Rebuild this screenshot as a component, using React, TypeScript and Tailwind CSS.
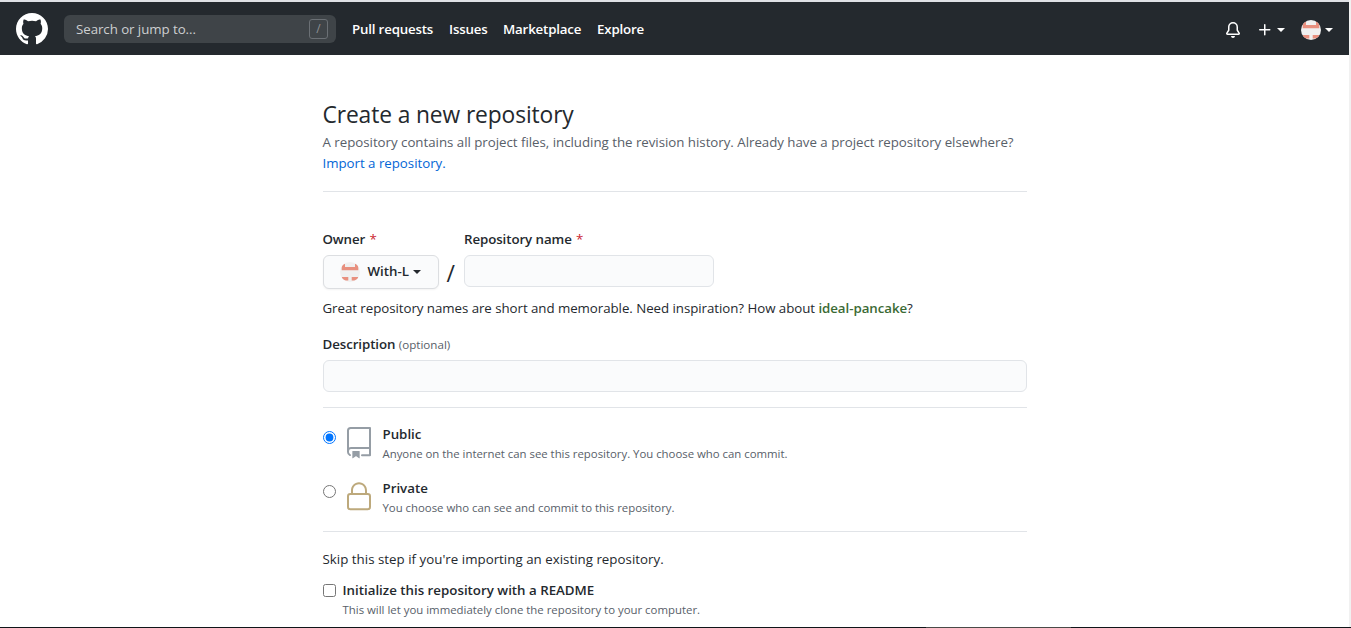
import React from "react";
import clsx from "clsx";

const MARK_PATH = "M8 0C3.58 0 0 3.58 0 8c0 3.54 2.29 6.53 5.47 7.59.4.07.55-.17.55-.38 0-.19-.01-.82-.01-1.49-2.01.37-2.53-.49-2.69-.94-.09-.23-.48-.94-.82-1.13-.28-.15-.68-.52-.01-.53.63-.01 1.08.58 1.23.82.72 1.21 1.87.87 2.33.66.07-.52.28-.87.51-1.07-1.78-.2-3.64-.89-3.64-3.95 0-.87.31-1.59.82-2.15-.08-.2-.36-1.02.08-2.12 0 0 .67-.21 2.2.82.64-.18 1.32-.27 2-.27.68 0 1.36.09 2 .27 1.53-1.04 2.2-.82 2.2-.82.44 1.1.16 1.92.08 2.12.51.56.82 1.27.82 2.15 0 3.07-1.87 3.75-3.65 3.95.29.25.54.73.54 1.48 0 1.07-.01 1.93-.01 2.2 0 .21.15.46.55.38A8.013 8.013 0 0016 8c0-4.42-3.58-8-8-8z"
const BELL_PATH = "M8 16a2 2 0 001.985-1.75c.017-.137-.097-.25-.235-.25h-3.5c-.138 0-.252.113-.235.25A2 2 0 008 16zM3 5a5 5 0 0110 0v2.947c0 .05.015.098.042.139l1.703 2.555A1.518 1.518 0 0113.482 13H2.518a1.518 1.518 0 01-1.263-2.36l1.703-2.554A.25.25 0 003 7.947V5zm5-3.5A3.5 3.5 0 004.5 5v2.947c0 .346-.102.683-.294.97l-1.703 2.556a.018.018 0 00-.003.01l.001.006c0 .002.002.004.004.006a.017.017 0 00.006.004l.007.001h10.964l.007-.001a.016.016 0 00.006-.004.016.016 0 00.004-.006l.001-.007a.017.017 0 00-.003-.01l-1.703-2.554a1.75 1.75 0 01-.294-.97V5A3.5 3.5 0 008 1.5z"
const PLUS_PATH = "M7.75 2a.75.75 0 01.75.75V7h4.25a.75.75 0 110 1.5H8.5v4.25a.75.75 0 11-1.5 0V8.5H2.75a.75.75 0 010-1.5H7V2.75A.75.75 0 017.75 2z"
const REPO_PATH = "M3 2.75A2.75 2.75 0 015.75 0h14.5a.75.75 0 01.75.75v20.5a.75.75 0 01-.75.75h-6a.75.75 0 010-1.5h5.25v-4H6A1.5 1.5 0 004.5 18v.75c0 .716.43 1.334 1.05 1.605a.75.75 0 01-.6 1.374A3.25 3.25 0 013 18.75v-16zM19.5 1.5H5.75c-.69 0-1.25.56-1.25 1.25v12.651A2.989 2.989 0 016 15h13.5V1.5zM7 18.25a.25.25 0 01.25-.25h5a.25.25 0 01.25.25v5.01a.25.25 0 01-.397.201l-2.206-1.604a.25.25 0 00-.294 0L7.397 23.46a.25.25 0 01-.397-.2v-5.01z"
const LOCK_PATH = "M6 9V7.25C6 3.845 8.503 1 12 1s6 2.845 6 6.25V9h.5a2.5 2.5 0 012.5 2.5v8a2.5 2.5 0 01-2.5 2.5h-13A2.5 2.5 0 013 19.5v-8A2.5 2.5 0 015.5 9H6zm1.5-1.75C7.5 4.58 9.422 2.5 12 2.5c2.578 0 4.5 2.08 4.5 4.75V9h-9V7.25zm-3 4.25a1 1 0 011-1h13a1 1 0 011 1v8a1 1 0 01-1 1h-13a1 1 0 01-1-1v-8z"

function Icon({path, box = 16, className}: { path: string; box?: number; className?: string }) {
    return (
        <svg viewBox={`0 0 ${box} ${box}`} fill="currentColor" fillRule="evenodd"
             className={clsx("shrink-0", className)}>
            <path d={path}/>
        </svg>
    )
}

function Caret({className}: { className?: string }) {
    return <span className={clsx("h-0 w-0 border-x-4 border-t-4 border-x-transparent", className)}/>
}

function Avatar({className}: { className?: string }) {
    return (
        <svg viewBox="0 0 20 20" className={clsx("size-5 shrink-0 rounded-full", className)}>
            <rect width="20" height="20" fill="#f0f0f0"/>
            <path fill="#e8907f" d="M1.7 1.7H5V5h10V1.7h3.3v6.6H1.7zM1.7 15h6.6v3.6H1.7zM11.7 15h6.6v3.6h-6.6z"/>
        </svg>
    )
}

function Required() {
    return <span className="ml-px font-normal text-[#cb2431]">*</span>
}

function Header() {
    const links = [
        {label: "Pull requests", className: "w-[97px]"},
        {label: "Issues", className: "w-[54px]"},
        {label: "Marketplace", className: "w-[94px]"},
        {label: "Explore", className: ""},
    ]

    return (
        <header className="flex h-[55px] items-center border-t-2 border-[#dfe1e5] bg-[#24292e] pt-px pr-4 pl-4 text-white">
            <Icon path={MARK_PATH} className="size-8"/>
            <div className="ml-4 flex h-7 w-[272px] items-center justify-between rounded-md bg-[#3f4448] pr-2 pl-3">
                <span className="pt-px text-[13.3px] tracking-[-0.06px] text-[#cdcfd1]">Search or jump to...</span>
                <span className="flex h-5 w-[19px] items-center justify-center rounded-[3px] border border-[#6b7075] text-[12px] text-[#8d9195]">/</span>
            </div>
            <nav className="ml-4 flex pt-0.5 text-[13.3px] font-semibold tracking-[-0.18px] whitespace-nowrap">
                {links.map(link => (
                    <a key={link.label} href="#" className={link.className}>{link.label}</a>
                ))}
            </nav>
            <div className="ml-auto flex items-center pt-0.5">
                <Icon path={BELL_PATH} className="size-4"/>
                <Icon path={PLUS_PATH} className="ml-4 size-4"/>
                <Caret className="ml-1"/>
                <Avatar className="ml-4"/>
                <Caret className="ml-1"/>
            </div>
        </header>
    )
}

function VisibilityOption({title, note, icon, iconClass, checked}: {
    title: string
    note: string
    icon: string
    iconClass: string
    checked?: boolean
}) {
    return (
        <label className="flex h-[54px] items-start">
            <input type="radio" name="visibility" defaultChecked={checked} className="mt-1 size-[13px]"/>
            <Icon path={icon} box={24} className={clsx("ml-[7px] size-8", iconClass)}/>
            <span className="ml-2 flex flex-col">
                <span className="text-[13.3px] leading-[15px] font-semibold">{title}</span>
                <span className="mt-[3px] text-[11.4px] leading-[18px] tracking-[-0.015px] text-[#586069]">{note}</span>
            </span>
        </label>
    )
}

export default function App() {
    return (
        <div className="flex h-[628px] flex-col overflow-hidden bg-white font-['Open_Sans','Noto_Sans',sans-serif] text-[#24292e]">
            <div className="flex min-h-0 flex-1">
                <div className="w-[1349px]">
                    <Header/>
                    <main className="mx-auto w-[704px] pt-[42px] text-[13.3px] leading-[21px]">
                        <h1 className="text-[22.8px] leading-[35px] tracking-[-0.12px]">Create a new repository</h1>
                        <p className="tracking-[-0.025px] text-[#586069]">
                            <span className="block whitespace-nowrap">A repository contains all project files, including the revision history. Already have a project repository elsewhere?</span>
                            <a href="#" className="text-[#0366d6]">Import a repository.</a>
                        </p>
                        <hr className="mt-[17px] border-[#e1e4e8]"/>

                        <div className="mt-[37px] flex">
                            <div className="w-[141.5px]">
                                <div className="font-semibold tracking-[-0.1px]">Owner <Required/></div>
                                <div className="mt-[5px] flex">
                                    <button className="flex h-[34px] w-[116px] items-center rounded-md border border-[#dcdee1] bg-[#fafbfc] pl-4 font-semibold shadow-xs">
                                        <Avatar/>
                                        <span className="ml-2 pb-0.5">With-L</span>
                                        <Caret className="ml-1"/>
                                    </button>
                                    <span className="ml-2 text-[23px] leading-9">/</span>
                                </div>
                            </div>
                            <div>
                                <div className="font-semibold tracking-[-0.08px]">Repository name <Required/></div>
                                <input className="mt-[5px] block h-8 w-[250px] rounded-md border border-[#e1e4e8] bg-[#fafbfc]"/>
                            </div>
                        </div>
                        <p className="mt-[7px] tracking-[-0.05px] whitespace-nowrap">
                            <span>Great repository names are short and memorable. Need inspiration? How about </span>
                            <strong className="font-semibold text-[#3b6a34]">ideal-pancake</strong>?
                        </p>

                        <div className="mt-[15px]">
                            <span className="font-semibold tracking-[-0.08px]">Description</span>{" "}
                            <span className="text-[11.6px] text-[#586069]">(optional)</span>
                        </div>
                        <input className="mt-[5px] block h-8 w-full rounded-md border border-[#e1e4e8] bg-[#fafbfc]"/>
                        <hr className="mt-[15px] mb-[19px] border-[#e1e4e8]"/>

                        <VisibilityOption
                            title="Public"
                            note="Anyone on the internet can see this repository. You choose who can commit."
                            icon={REPO_PATH}
                            iconClass="text-[#959da5]"
                            checked
                        />
                        <VisibilityOption
                            title="Private"
                            note="You choose who can see and commit to this repository."
                            icon={LOCK_PATH}
                            iconClass="text-[#bda97c]"
                        />
                        <hr className="-mt-1 border-[#e1e4e8]"/>

                        <p className="mt-[17px] tracking-[0.02px]">Skip this step if you're importing an existing repository.</p>
                        <label className="mt-[10px] flex items-start">
                            <input type="checkbox" className="mt-1 size-[13px]"/>
                            <span className="ml-[7px] flex flex-col">
                                <span className="font-semibold">Initialize this repository with a README</span>
                                <span className="text-[11.4px] leading-[18px] text-[#586069]">This will let you immediately clone the repository to your computer.</span>
                            </span>
                        </label>
                    </main>
                </div>
                <div className="flex-1 bg-[#f1f1f1]"/>
            </div>
            {/* edge of the taskbar */}
            <div className="flex h-px shrink-0 bg-[#101519]">
                <div className="ml-[926px] w-[145px] bg-[#4a4a48]"/>
            </div>
        </div>
    )
}
